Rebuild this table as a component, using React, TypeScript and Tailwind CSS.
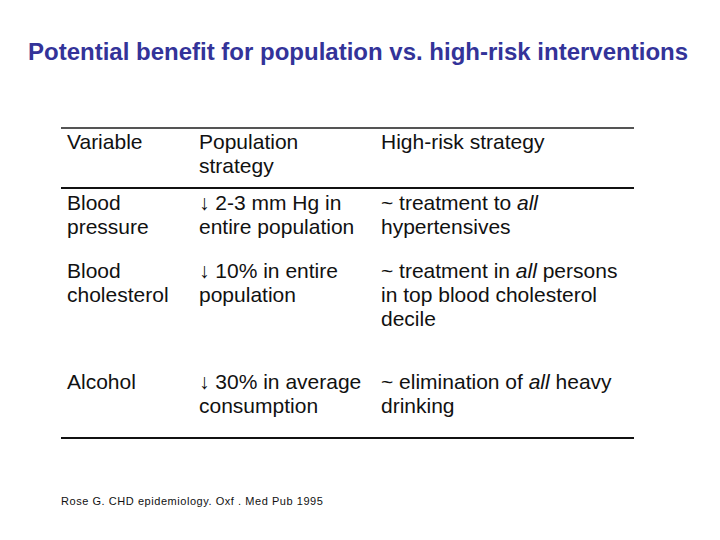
const ROWS = [
  {
    key: "head",
    h: "h-[60px]",
    pt: "pt-px",
    border: "border-b-2 border-[#111]",
    cells: [
      <>Variable</>,
      <>
        Population
        <br />
        strategy
      </>,
      <>High-risk strategy</>,
    ],
  },
  {
    key: "bp",
    h: "h-[68px]",
    pt: "pt-[2px]",
    border: "",
    cells: [
      <>
        Blood
        <br />
        pressure
      </>,
      <>
        ↓ 2-3 mm Hg in
        <br />
        entire population
      </>,
      <>
        ~ treatment to <i>all</i>
        <br />
        hypertensives
      </>,
    ],
  },
  {
    key: "chol",
    h: "h-[111px]",
    pt: "pt-[2px]",
    border: "",
    cells: [
      <>
        Blood
        <br />
        cholesterol
      </>,
      <>
        ↓ 10% in entire
        <br />
        population
      </>,
      <>
        ~ treatment in <i>all</i> persons
        <br />
        in top blood cholesterol
        <br />
        decile
      </>,
    ],
  },
  {
    key: "alc",
    h: "h-[71px]",
    pt: "pt-[2px]",
    border: "border-b-2 border-[#111]",
    cells: [
      <>Alcohol</>,
      <>
        ↓ 30% in average
        <br />
        consumption
      </>,
      <>
        ~ elimination of <i>all</i> heavy
        <br />
        drinking
      </>,
    ],
  },
];

export default function App() {
  return (
    <div className="w-[720px] h-[540px] bg-white overflow-hidden font-['Liberation_Sans',Arial,sans-serif]">
      <h1 className="pt-[39px] pl-[28px] text-[24px] leading-[26px] font-bold text-[#333399] whitespace-nowrap">
        Potential benefit for population vs. high-risk interventions
      </h1>

      <div className="mt-[62px] ml-[61px] w-[573px] border-t-2 border-[#555] text-[21px] leading-[24px] text-[#111]">
        {ROWS.map((row) => (
          <div
            key={row.key}
            className={`grid grid-cols-[132px_182px_1fr] ${row.h} ${row.pt} ${row.border}`}
          >
            {row.cells.map((c, i) => (
              <div key={i} className="pl-[6px] whitespace-nowrap">
                {c}
              </div>
            ))}
          </div>
        ))}
      </div>

      <p className="mt-[55px] ml-[61px] text-[11px] leading-[14px] tracking-[0.55px] text-[#111]">
        Rose G. CHD epidemiology. Oxf . Med Pub 1995
      </p>
    </div>
  );
}
